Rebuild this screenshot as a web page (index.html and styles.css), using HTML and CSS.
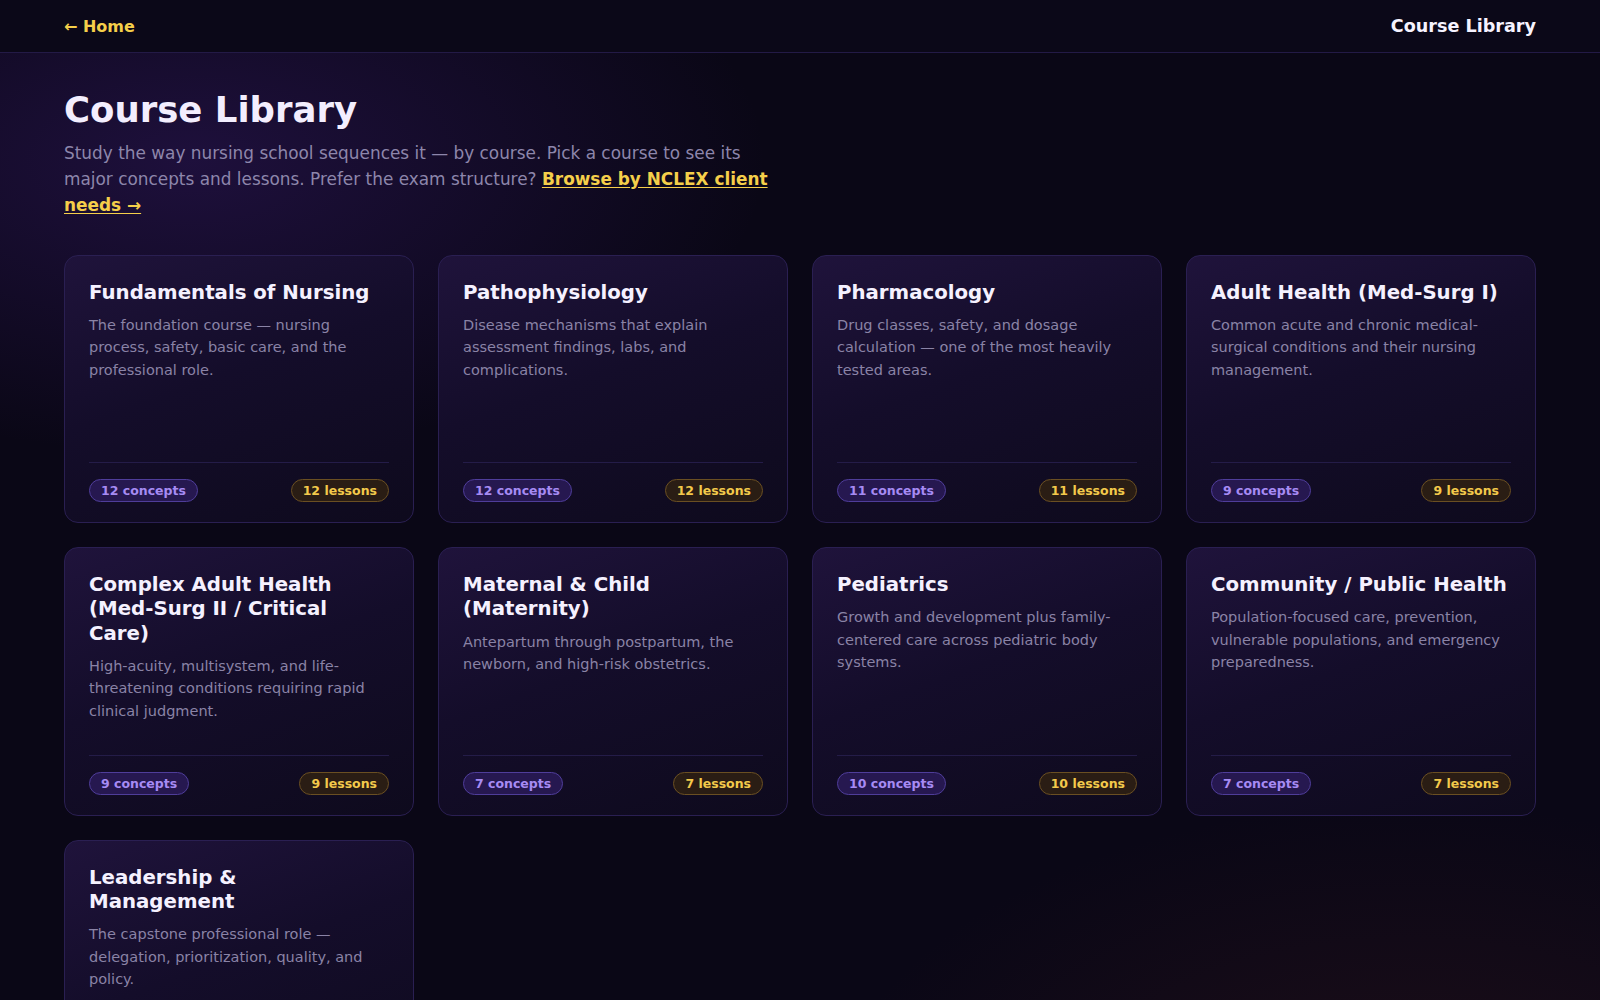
FILE: index.html
```html
<!DOCTYPE html>
<html>
  <head>
    <link rel="stylesheet" href="styles.css">
  </head>
  <body>
    <header class="topbar">
      <a class="home-link" href="#">← Home</a>
      <span class="topbar-title">Course Library</span>
    </header>
    <main class="container">
      <section class="intro">
        <h1 class="page-title">Course Library</h1>
        <p class="lead">
          Study the way nursing school sequences it — by course. Pick a course to see its major concepts and lessons. Prefer the exam structure?
          <a class="lead-link" href="#">Browse by NCLEX client needs →</a>
        </p>
      </section>

      <ul class="course-grid">
        <li class="course-card">
          <h2 class="course-name">Fundamentals of Nursing</h2>
          <p class="course-desc">The foundation course — nursing process, safety, basic care, and the professional role.</p>
          <div class="course-meta">
            <span class="pill pill-concepts">12 concepts</span>
            <span class="pill pill-lessons">12 lessons</span>
          </div>
        </li>
        <li class="course-card">
          <h2 class="course-name">Pathophysiology</h2>
          <p class="course-desc">Disease mechanisms that explain assessment findings, labs, and complications.</p>
          <div class="course-meta">
            <span class="pill pill-concepts">12 concepts</span>
            <span class="pill pill-lessons">12 lessons</span>
          </div>
        </li>
        <li class="course-card">
          <h2 class="course-name">Pharmacology</h2>
          <p class="course-desc">Drug classes, safety, and dosage calculation — one of the most heavily tested areas.</p>
          <div class="course-meta">
            <span class="pill pill-concepts">11 concepts</span>
            <span class="pill pill-lessons">11 lessons</span>
          </div>
        </li>
        <li class="course-card">
          <h2 class="course-name">Adult Health (Med-Surg I)</h2>
          <p class="course-desc">Common acute and chronic medical-surgical conditions and their nursing management.</p>
          <div class="course-meta">
            <span class="pill pill-concepts">9 concepts</span>
            <span class="pill pill-lessons">9 lessons</span>
          </div>
        </li>
        <li class="course-card">
          <h2 class="course-name">Complex Adult Health (Med-Surg II / Critical Care)</h2>
          <p class="course-desc">High-acuity, multisystem, and life-threatening conditions requiring rapid clinical judgment.</p>
          <div class="course-meta">
            <span class="pill pill-concepts">9 concepts</span>
            <span class="pill pill-lessons">9 lessons</span>
          </div>
        </li>
        <li class="course-card">
          <h2 class="course-name">Maternal &amp; Child (Maternity)</h2>
          <p class="course-desc">Antepartum through postpartum, the newborn, and high-risk obstetrics.</p>
          <div class="course-meta">
            <span class="pill pill-concepts">7 concepts</span>
            <span class="pill pill-lessons">7 lessons</span>
          </div>
        </li>
        <li class="course-card">
          <h2 class="course-name">Pediatrics</h2>
          <p class="course-desc">Growth and development plus family-centered care across pediatric body systems.</p>
          <div class="course-meta">
            <span class="pill pill-concepts">10 concepts</span>
            <span class="pill pill-lessons">10 lessons</span>
          </div>
        </li>
        <li class="course-card">
          <h2 class="course-name">Community / Public Health</h2>
          <p class="course-desc">Population-focused care, prevention, vulnerable populations, and emergency preparedness.</p>
          <div class="course-meta">
            <span class="pill pill-concepts">7 concepts</span>
            <span class="pill pill-lessons">7 lessons</span>
          </div>
        </li>
        <li class="course-card">
          <h2 class="course-name">Leadership &amp; Management</h2>
          <p class="course-desc">The capstone professional role — delegation, prioritization, quality, and policy.</p>
          <div class="course-meta">
            <span class="pill pill-concepts">8 concepts</span>
            <span class="pill pill-lessons">8 lessons</span>
          </div>
        </li>
      </ul>
    </main>
  </body>
</html>
```

FILE: styles.css
```css
* {
  margin: 0;
  padding: 0;
  box-sizing: border-box;
}

html {
  background: #0a0716;
}

body {
  min-height: 100vh;
  font-family: "DejaVu Sans", "Liberation Sans", sans-serif;
  color: #f3eefe;
  background:
    radial-gradient(ellipse 820px 420px at 12% 14%, rgba(72, 34, 140, 0.32), transparent 70%),
    radial-gradient(ellipse 820px 480px at 88% 100%, rgba(78, 32, 30, 0.3), transparent 72%),
    #0a0716;
}

a {
  text-decoration: none;
}

.topbar {
  height: 53px;
  padding: 0 64px;
  display: flex;
  align-items: center;
  justify-content: space-between;
  background: #0b0818;
  border-bottom: 1px solid #231a46;
}

.home-link {
  color: #f5cf4a;
  font-weight: bold;
  font-size: 16px;
}

.topbar-title {
  color: #f6f3ff;
  font-weight: bold;
  font-size: 17.6px;
}

.container {
  padding: 36px 64px 40px;
}

.page-title {
  font-size: 35.5px;
  line-height: 1.2;
  font-weight: bold;
  color: #f3eefe;
  margin-bottom: 8px;
}

.lead {
  max-width: 720px;
  font-size: 16.9px;
  line-height: 1.56;
  color: #8d86ab;
}

.lead-link {
  color: #f5cf4a;
  font-weight: bold;
  text-decoration: underline;
  text-underline-offset: 2px;
}

.course-grid {
  list-style: none;
  margin-top: 36px;
  display: grid;
  grid-template-columns: repeat(4, 1fr);
  grid-auto-rows: 1fr;
  gap: 24px;
}

.course-card {
  display: flex;
  flex-direction: column;
  padding: 25px 24px 20px;
  border: 1px solid #2a1f52;
  border-radius: 14px;
  background: linear-gradient(160deg, #1f133b 0%, #140d2a 45%, #0e0a1d 100%);
}

.course-name {
  padding-right: 2px;
  font-size: 19.75px;
  line-height: 1.22;
  font-weight: bold;
  color: #f5f1ff;
}

.course-desc {
  margin: 9px 0 33px;
  font-size: 14.5px;
  line-height: 1.55;
  color: #8a83a6;
}

.course-meta {
  margin-top: auto;
  padding-top: 16px;
  border-top: 1px solid #241c48;
  display: flex;
  justify-content: space-between;
  align-items: center;
}

.pill {
  font-size: 12.5px;
  line-height: 15px;
  font-weight: bold;
  padding: 3px 11px;
  border-radius: 999px;
  border: 1px solid;
}

.pill-concepts {
  color: #a68bf4;
  background: #261850;
  border-color: #4f3d9a;
}

.pill-lessons {
  color: #f3c94b;
  background: #2a1d14;
  border-color: #6a4f22;
}
```
